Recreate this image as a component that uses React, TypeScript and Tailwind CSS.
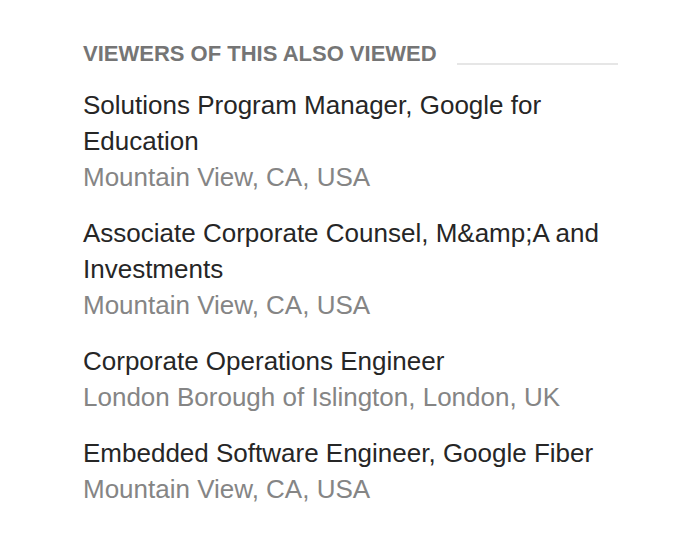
import React from "react";

type Job = {
  title: string;
  location: string;
};

const jobs: Job[] = [
  {
    title: "Solutions Program Manager, Google for Education",
    location: "Mountain View, CA, USA",
  },
  {
    title: "Associate Corporate Counsel, M&amp;A and Investments",
    location: "Mountain View, CA, USA",
  },
  {
    title: "Corporate Operations Engineer",
    location: "London Borough of Islington, London, UK",
  },
  {
    title: "Embedded Software Engineer, Google Fiber",
    location: "Mountain View, CA, USA",
  },
];

const App = () => {
  return (
    <div className="w-[700px] h-[560px] bg-white font-['Liberation_Sans',Arial,sans-serif]">
      <div className="w-[535px] ml-[83px] pt-[42px]">
        <div className="flex items-end">
          <h2 className="text-[22px] leading-[24px] font-bold text-[#757575] uppercase">
            Viewers of this also viewed
          </h2>
          <div className="flex-1 ml-5 mb-[1px] h-[2px] bg-[#e6e6e6]"></div>
        </div>
        <ul className="mt-[21px]">
          {jobs.map((job, i) => (
            <li key={job.title + i} className="mb-5">
              <p className="text-[26px] leading-[36px] text-[#262626]">
                {job.title}
              </p>
              <p className="text-[26px] leading-[36px] text-[#858585]">
                {job.location}
              </p>
            </li>
          ))}
        </ul>
      </div>
    </div>
  );
};

export default App;
